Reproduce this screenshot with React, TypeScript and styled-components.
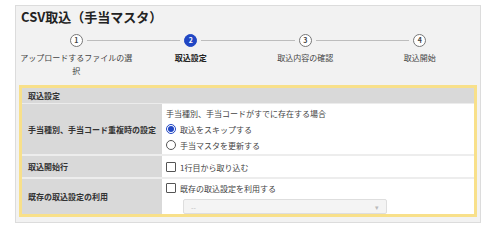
import React from 'react';
import styled, { createGlobalStyle } from 'styled-components';

const GlobalStyle = createGlobalStyle`
  body {
    margin: 0;
    background: #ffffff;
    font-family: "Noto Sans CJK JP", "Noto Sans", sans-serif;
    color: #333;
  }
`;

const Panel = styled.div`
  box-sizing: border-box;
  width: 466px;
  height: 218px;
  margin: 5px 0 0 15px;
  padding: 1px 3px 5px 3px;
  background: #f2f2f2;
  border: 1px solid #dcdcdc;
  display: flex;
  flex-direction: column;
`;

const Title = styled.h1`
  margin: 0 0 7px 2px;
  font-size: 13px;
  line-height: 20px;
  font-weight: 700;
  color: #222;
`;

const Steps = styled.div`
  display: grid;
  grid-template-columns: repeat(4, 1fr);
  height: 52px;
`;

const Step = styled.div`
  display: flex;
  flex-direction: column;
  align-items: stretch;
`;

const CircleRow = styled.div`
  display: flex;
  align-items: center;
  height: 13px;
`;

const Segment = styled.span<{ $hidden?: boolean }>`
  flex: 1;
  height: 1px;
  background: ${(p) => (p.$hidden ? 'transparent' : '#bdbdbd')};
`;

const Circle = styled.span<{ $active?: boolean }>`
  box-sizing: border-box;
  width: 13px;
  height: 13px;
  margin: 0 4px;
  border-radius: 50%;
  display: flex;
  align-items: center;
  justify-content: center;
  font-size: 7px;
  font-weight: 700;
  line-height: 1;
  border: 1px solid ${(p) => (p.$active ? '#2147c4' : '#777')};
  background: ${(p) => (p.$active ? '#2147c4' : '#fff')};
  color: ${(p) => (p.$active ? '#fff' : '#444')};
`;

const StepLabel = styled.div<{ $active?: boolean }>`
  margin-top: 4px;
  padding: 0 1px;
  font-size: 8px;
  line-height: 13px;
  text-align: center;
  font-weight: ${(p) => (p.$active ? 700 : 400)};
  color: ${(p) => (p.$active ? '#222' : '#444')};
`;

const Frame = styled.div`
  flex: 1;
  border: 3px solid #f8e08a;
  background: #fff;
  display: flex;
  flex-direction: column;
`;

const Header = styled.div`
  height: 15px;
  padding-left: 6px;
  background: #d9d9d9;
  font-size: 8px;
  font-weight: 700;
  line-height: 15px;
  color: #333;
  border-bottom: 1px solid #ececec;
`;

const Row = styled.div<{ $height?: number; $last?: boolean }>`
  display: grid;
  grid-template-columns: 140px 1fr;
  height: ${(p) => (p.$height ? `${p.$height}px` : 'auto')};
  flex: ${(p) => (p.$last ? 1 : 'none')};
  border-bottom: ${(p) => (p.$last ? 'none' : '2px solid #ededed')};
`;

const Label = styled.div`
  display: flex;
  align-items: center;
  padding-left: 6px;
  background: #d9d9d9;
  font-size: 8px;
  font-weight: 700;
  color: #333;
`;

const Value = styled.div<{ $center?: boolean }>`
  display: flex;
  flex-direction: column;
  justify-content: ${(p) => (p.$center ? 'center' : 'flex-start')};
  padding: 1px 0 0 4px;
  font-size: 8px;
  color: #444;
`;

const Line = styled.div`
  display: flex;
  align-items: center;
  height: 16px;
  gap: 4px;
`;

const Radio = styled.span<{ $checked?: boolean }>`
  box-sizing: border-box;
  width: 10px;
  height: 10px;
  border-radius: 50%;
  border: 1px solid ${(p) => (p.$checked ? '#2147c4' : '#555')};
  background: #fff;
  display: flex;
  align-items: center;
  justify-content: center;
  &::after {
    content: '';
    width: 6px;
    height: 6px;
    border-radius: 50%;
    background: ${(p) => (p.$checked ? '#2147c4' : 'transparent')};
  }
`;

const Checkbox = styled.span`
  box-sizing: border-box;
  width: 10px;
  height: 10px;
  border: 1px solid #555;
  border-radius: 1px;
  background: #fff;
`;

const Select = styled.div`
  box-sizing: border-box;
  width: 204px;
  height: 15px;
  margin: 3px 0 0 17px;
  padding: 0 7px;
  display: flex;
  align-items: center;
  justify-content: space-between;
  background: #f4f4f4;
  border: 1px solid #dedede;
  border-radius: 2px;
  font-size: 7px;
  color: #bbb;
`;

const steps = ['アップロードするファイルの選択', '取込設定', '取込内容の確認', '取込開始'];
const activeStep = 1;

export default function App() {
  return (
    <>
      <GlobalStyle />
      <Panel>
        <Title>CSV取込（手当マスタ）</Title>
        <Steps>
          {steps.map((label, i) => (
            <Step key={label}>
              <CircleRow>
                <Segment $hidden={i === 0} />
                <Circle $active={i === activeStep}>{i + 1}</Circle>
                <Segment $hidden={i === steps.length - 1} />
              </CircleRow>
              <StepLabel $active={i === activeStep}>{label}</StepLabel>
            </Step>
          ))}
        </Steps>
        <Frame>
          <Header>取込設定</Header>
          <Row $height={50}>
            <Label>手当種別、手当コード重複時の設定</Label>
            <Value>
              <Line>手当種別、手当コードがすでに存在する場合</Line>
              <Line>
                <Radio $checked />
                取込をスキップする
              </Line>
              <Line>
                <Radio />
                手当マスタを更新する
              </Line>
            </Value>
          </Row>
          <Row $height={21}>
            <Label>取込開始行</Label>
            <Value $center>
              <Line>
                <Checkbox />
                1行目から取り込む
              </Line>
            </Value>
          </Row>
          <Row $last>
            <Label>既存の取込設定の利用</Label>
            <Value>
              <Line>
                <Checkbox />
                既存の取込設定を利用する
              </Line>
              <Select>
                <span>--</span>
                <span>▾</span>
              </Select>
            </Value>
          </Row>
        </Frame>
      </Panel>
    </>
  );
}
